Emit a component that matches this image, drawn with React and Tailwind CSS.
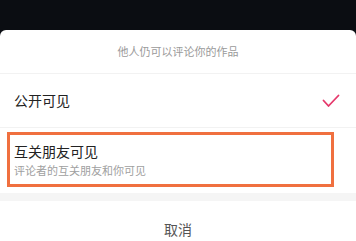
export default function App() {
  return (
    <div
      className="w-[356px] h-[241px] overflow-hidden bg-[#0b0d12] flex flex-col"
      style={{ fontFamily: '"Noto Sans CJK SC", "Noto Sans", sans-serif' }}
    >
      <div className="h-[30px] shrink-0" />
      <div className="flex-1 bg-white rounded-t-[6px] flex flex-col">
        <div className="h-[44px] shrink-0 flex items-center justify-center text-[11px] text-[#9a9a9a] border-b border-[#f2f2f2]">
          他人仍可以评论你的作品
        </div>
        <div className="h-[54px] shrink-0 flex items-center justify-between pl-[14px] pr-[16px] border-b border-[#f2f2f2]">
          <span className="text-[14px] text-[#222]">公开可见</span>
          <CheckIcon />
        </div>
        <div className="h-[65px] shrink-0 pt-[4px] pl-[7px] pr-[22px]">
          <div className="h-[55px] border-[3px] border-[#f0703f] pl-[4px] pt-[1px] flex flex-col justify-center">
            <span className="text-[14px] leading-[20px] text-[#222]">互关朋友可见</span>
            <span className="text-[11px] leading-[18px] text-[#a0a0a0]">评论者的互关朋友和你可见</span>
          </div>
        </div>
        <div className="h-[8px] shrink-0 bg-[#f5f5f5]" />
        <div className="flex-1 flex justify-center pt-[18px] text-[14px] leading-[20px] text-[#555]">
          取消
        </div>
      </div>
    </div>
  );
}

function CheckIcon() {
  return (
    <svg width="18" height="14" viewBox="0 0 18 14" fill="none" stroke="#e5386b" strokeWidth="1.8" strokeLinecap="round" strokeLinejoin="round">
      <path d="M1.5 6.5 6.5 12 16.5 1.5" />
    </svg>
  );
}
